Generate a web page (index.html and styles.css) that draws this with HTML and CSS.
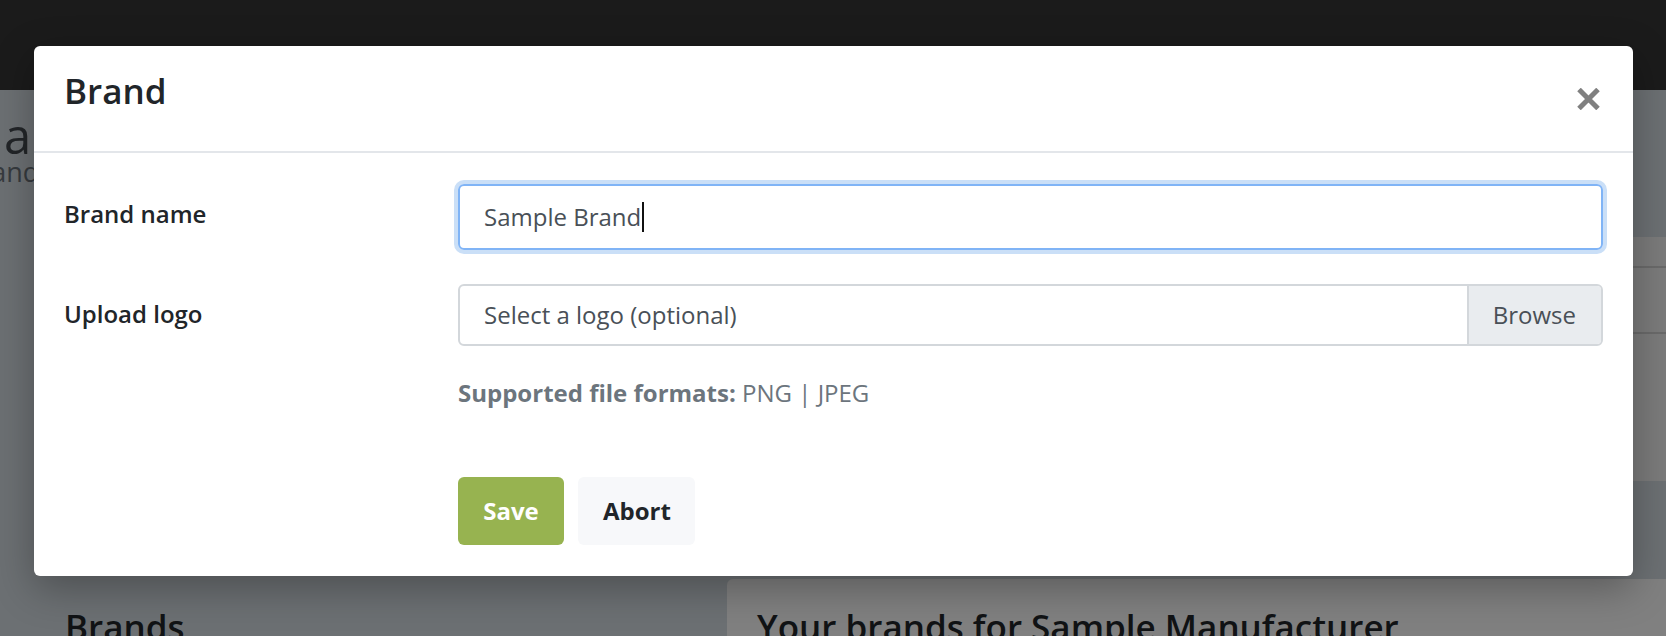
FILE: index.html
```html
<!DOCTYPE html>
<html lang="en">
<head>
<meta charset="utf-8">
<title>Brand</title>
<link rel="stylesheet" href="styles.css">
</head>
<body>
<header class="navbar"></header>
<main class="page">
  <div class="page-head">
    <h1 class="page-title">Brands admin</h1>
    <p class="page-sub">Manage brands and logos</p>
  </div>
  <div class="top-row">
    <div class="col-left"></div>
    <div class="card table-card">
      <div class="t-head"></div>
      <div class="t-row"></div>
      <div class="t-rest"></div>
    </div>
  </div>
  <div class="bottom-row">
    <div class="col-left">
      <h2 class="section-title">Brands</h2>
    </div>
    <div class="card brands-card">
      <h2 class="section-title">Your brands for Sample Manufacturer</h2>
    </div>
  </div>
</main>

<div class="modal" role="dialog">
  <div class="modal-header">
    <h3 class="modal-title">Brand</h3>
    <button class="close" type="button" aria-label="Close">
      <svg width="23" height="22" viewBox="0 0 23 22"><path d="M2 1.5 L21 20.5 M21 1.5 L2 20.5" stroke="#808080" stroke-width="5" fill="none"/></svg>
    </button>
  </div>
  <div class="modal-body">
    <div class="form-row">
      <label class="form-label">Brand name</label>
      <div class="form-control focused"><span>Sample Brand</span><span class="caret"></span></div>
    </div>
    <div class="form-row">
      <label class="form-label">Upload logo</label>
      <div class="file-input">
        <span class="file-label">Select a logo (optional)</span>
        <span class="file-browse">Browse</span>
      </div>
    </div>
    <div class="form-row help">
      <div></div>
      <p class="help-text"><strong>Supported file formats:</strong> PNG | JPEG</p>
    </div>
    <div class="form-row">
      <div></div>
      <div class="actions">
        <button class="btn btn-save" type="button">Save</button>
        <button class="btn btn-abort" type="button">Abort</button>
      </div>
    </div>
  </div>
</div>
</body>
</html>
```
FILE: styles.css
```css
* { box-sizing: border-box; }

body {
  margin: 0;
  width: 1666px;
  height: 636px;
  overflow: hidden;
  position: relative;
  background: #6c7073;
  font-family: "Open Sans", "Liberation Sans", sans-serif;
  color: #212529;
}

.navbar {
  height: 90px;
  background: #1b1b1b;
}

.page-head {
  margin-left: -50px;
  white-space: nowrap;
}

.page-title {
  margin: 22px 0 0 -121px;
  font-size: 49px;
  line-height: 46px;
  font-weight: 500;
  color: #222528;
}

.page-sub {
  margin: -1px 0 0 -162px;
  font-size: 27px;
  line-height: 30px;
  color: #363a3e;
}

.top-row {
  margin-top: 50px;
  display: grid;
  grid-template-columns: 727px 1000px;
}

.card {
  border-radius: 6px;
}

.table-card {
  height: 244px;
  background: #7b7b7b;
  display: flex;
  flex-direction: column;
}

.t-head {
  height: 31px;
  border-bottom: 2px solid #6a6a6a;
}

.t-row {
  height: 66px;
  border-bottom: 2px solid #6a6a6a;
}

.bottom-row {
  margin-top: 98px;
  display: grid;
  grid-template-columns: 727px 1000px;
}

.bottom-row .col-left {
  padding: 27px 0 0 65px;
}

.brands-card {
  background: #808080;
  padding: 27px 30px;
  height: 200px;
}

.section-title {
  margin: 0;
  font-size: 35px;
  line-height: 1.2;
  font-weight: 600;
  color: #111315;
  white-space: nowrap;
}

/* Modal */
.modal {
  position: absolute;
  top: 46px;
  left: 34px;
  width: 1599px;
  background: #fff;
  border-radius: 6px;
  box-shadow: 0 12px 40px rgba(0, 0, 0, 0.3);
}

.modal-header {
  height: 107px;
  display: flex;
  justify-content: space-between;
  align-items: flex-start;
  padding: 23px 33px 0 30px;
  border-bottom: 2px solid #e3e6ea;
}

.modal-title {
  margin: 0;
  font-size: 35px;
  line-height: 43px;
  font-weight: 600;
  color: #212529;
}

.close {
  margin-top: 19px;
  padding: 0;
  border: 0;
  background: none;
  width: 23px;
  height: 22px;
  display: block;
}

.close svg { display: block; }

.modal-body {
  padding: 31px 30px 31px;
  display: flex;
  flex-direction: column;
}

.form-row {
  display: grid;
  grid-template-columns: 394px 1fr;
}

.form-row + .form-row { margin-top: 34px; }

.form-row + .form-row.help { margin-top: 29px; }

.form-label {
  padding-top: 12px;
  font-size: 24px;
  line-height: 36px;
  font-weight: 600;
  color: #212529;
}

.form-control {
  height: 66px;
  display: flex;
  align-items: center;
  padding: 0 24px;
  border: 2px solid #80b4f6;
  border-radius: 6px;
  font-size: 24px;
  line-height: 36px;
  color: #495057;
}

.form-control.focused {
  box-shadow: 0 0 0 4px #cadff7;
}

.caret {
  display: inline-block;
  width: 2px;
  height: 30px;
  background: #111;
  margin-left: 1px;
}

.file-input {
  height: 62px;
  display: flex;
  border: 2px solid #d3d7db;
  border-radius: 6px;
  overflow: hidden;
  font-size: 24px;
  line-height: 36px;
  color: #495057;
}

.file-label {
  flex: 1;
  display: flex;
  align-items: center;
  padding-left: 24px;
}

.file-browse {
  display: flex;
  align-items: center;
  padding: 0 25px 0 24px;
  background: #e9ecef;
  border-left: 2px solid #d3d7db;
}

.help-text {
  margin: 0;
  font-size: 24px;
  line-height: 36px;
  color: #6c757d;
}

.help-text strong { font-weight: 700; }

.actions {
  display: flex;
  gap: 14px;
  margin-top: 32px;
}

.btn {
  height: 68px;
  padding: 0 25px;
  border: 0;
  border-radius: 6px;
  font-family: "Open Sans", "Liberation Sans", sans-serif;
  font-size: 24px;
  font-weight: 700;
  line-height: 36px;
}

.btn-save {
  background: #97b350;
  color: #fff;
  width: 106px;
}

.btn-abort {
  background: #f7f8fa;
  color: #212529;
  width: 117px;
}
```
